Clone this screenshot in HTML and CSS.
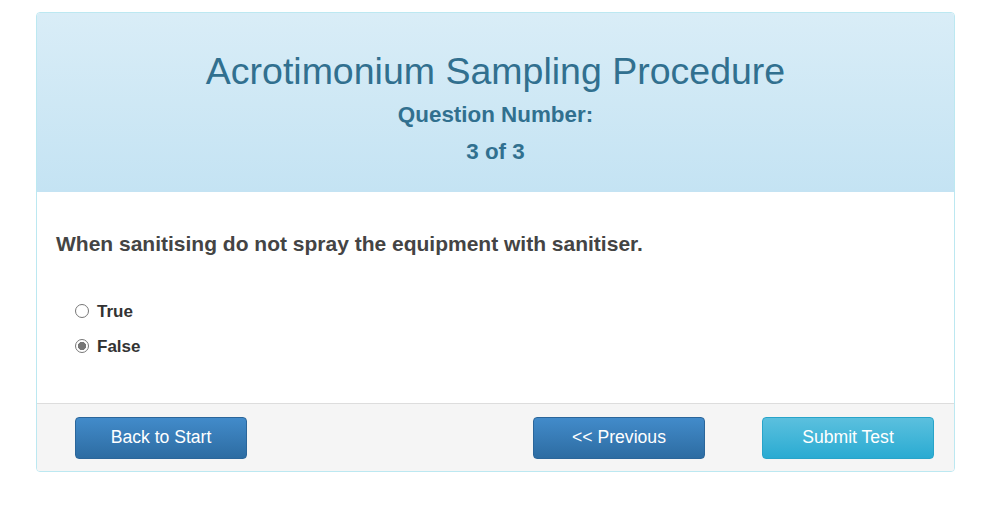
FILE: index.html
```html
<!DOCTYPE html>
<html>
<head>
<meta charset="utf-8">
<link rel="stylesheet" href="styles.css">
</head>
<body>
<div class="page">
  <div class="panel">
    <div class="panel-heading">
      <h1 class="title">Acrotimonium Sampling Procedure</h1>
      <div class="qnum">Question Number:</div>
      <div class="qcount">3 of 3</div>
    </div>
    <div class="panel-body">
      <p class="question">When sanitising do not spray the equipment with sanitiser.</p>
      <div class="options">
        <label class="option"><input type="radio" name="a"> True</label>
        <label class="option"><input type="radio" name="a" checked> False</label>
      </div>
    </div>
    <div class="panel-footer">
      <button class="btn btn-primary">Back to Start</button>
      <span></span>
      <button class="btn btn-primary">&lt;&lt; Previous</button>
      <button class="btn btn-info">Submit Test</button>
    </div>
  </div>
</div>
</body>
</html>
```

FILE: styles.css
```css
* { box-sizing: border-box; }
html, body { margin: 0; padding: 0; background: #fff; }
body { font-family: "Liberation Sans", Arial, sans-serif; color: #333; font-size: 14px; }
.page { padding: 12px 36px 0 36px; }
.panel {
  width: 919px;
  border: 1px solid #bce8f1;
  border-radius: 4px;
  background: #fff;
  overflow: hidden;
}
.panel-heading {
  height: 179px;
  background: linear-gradient(to bottom, #d9edf7 0%, #c4e3f3 100%);
  color: #31708f;
  text-align: center;
  padding-top: 36px;
}
.title {
  margin: 0;
  font-size: 37.5px;
  font-weight: normal;
  line-height: 44px;
}
.qnum, .qcount {
  font-size: 22.4px;
  font-weight: bold;
  line-height: 24px;
}
.qnum { margin-top: 10px; }
.qcount { margin-top: 13px; }
.panel-body { padding: 40px 19px 0 19px; height: 211px; }
.question {
  margin: 0;
  font-size: 21px;
  font-weight: bold;
  color: #444;
  line-height: 24px;
}
.options { margin-top: 46px; padding-left: 19px; }
.option {
  display: flex;
  align-items: center;
  font-size: 17px;
  font-weight: bold;
  color: #333;
  height: 20px;
  margin-bottom: 15px;
}
.option input {
  -webkit-appearance: none;
  appearance: none;
  margin: 0 8px 0 0;
  width: 14px;
  height: 14px;
  border: 1px solid #777;
  border-radius: 50%;
  background: #fff;
  position: relative;
  top: -1px;
}
.option input:checked {
  background: radial-gradient(circle, #767676 0, #767676 3.8px, #fff 4.4px);
}
.panel-footer {
  background: #f5f5f5;
  border-top: 1px solid #ddd;
  height: 68px;
  display: grid;
  grid-template-columns: 229px 229px 229px 1fr;
  align-items: center;
  padding-left: 38px;
  padding-top: 0;
}
.btn {
  width: 172px;
  height: 42px;
  border-radius: 4px;
  font-family: "Liberation Sans", Arial, sans-serif;
  font-size: 17.6px;
  color: #fff;
  padding: 0 0 1px 0;
  cursor: pointer;
}
.btn-primary {
  background: linear-gradient(to bottom, #428bca 0%, #2d6ca2 100%);
  border: 1px solid #2b669a;
}
.btn-info {
  background: linear-gradient(to bottom, #5bc0de 0%, #2aabd2 100%);
  border: 1px solid #28a4c9;
}
```
